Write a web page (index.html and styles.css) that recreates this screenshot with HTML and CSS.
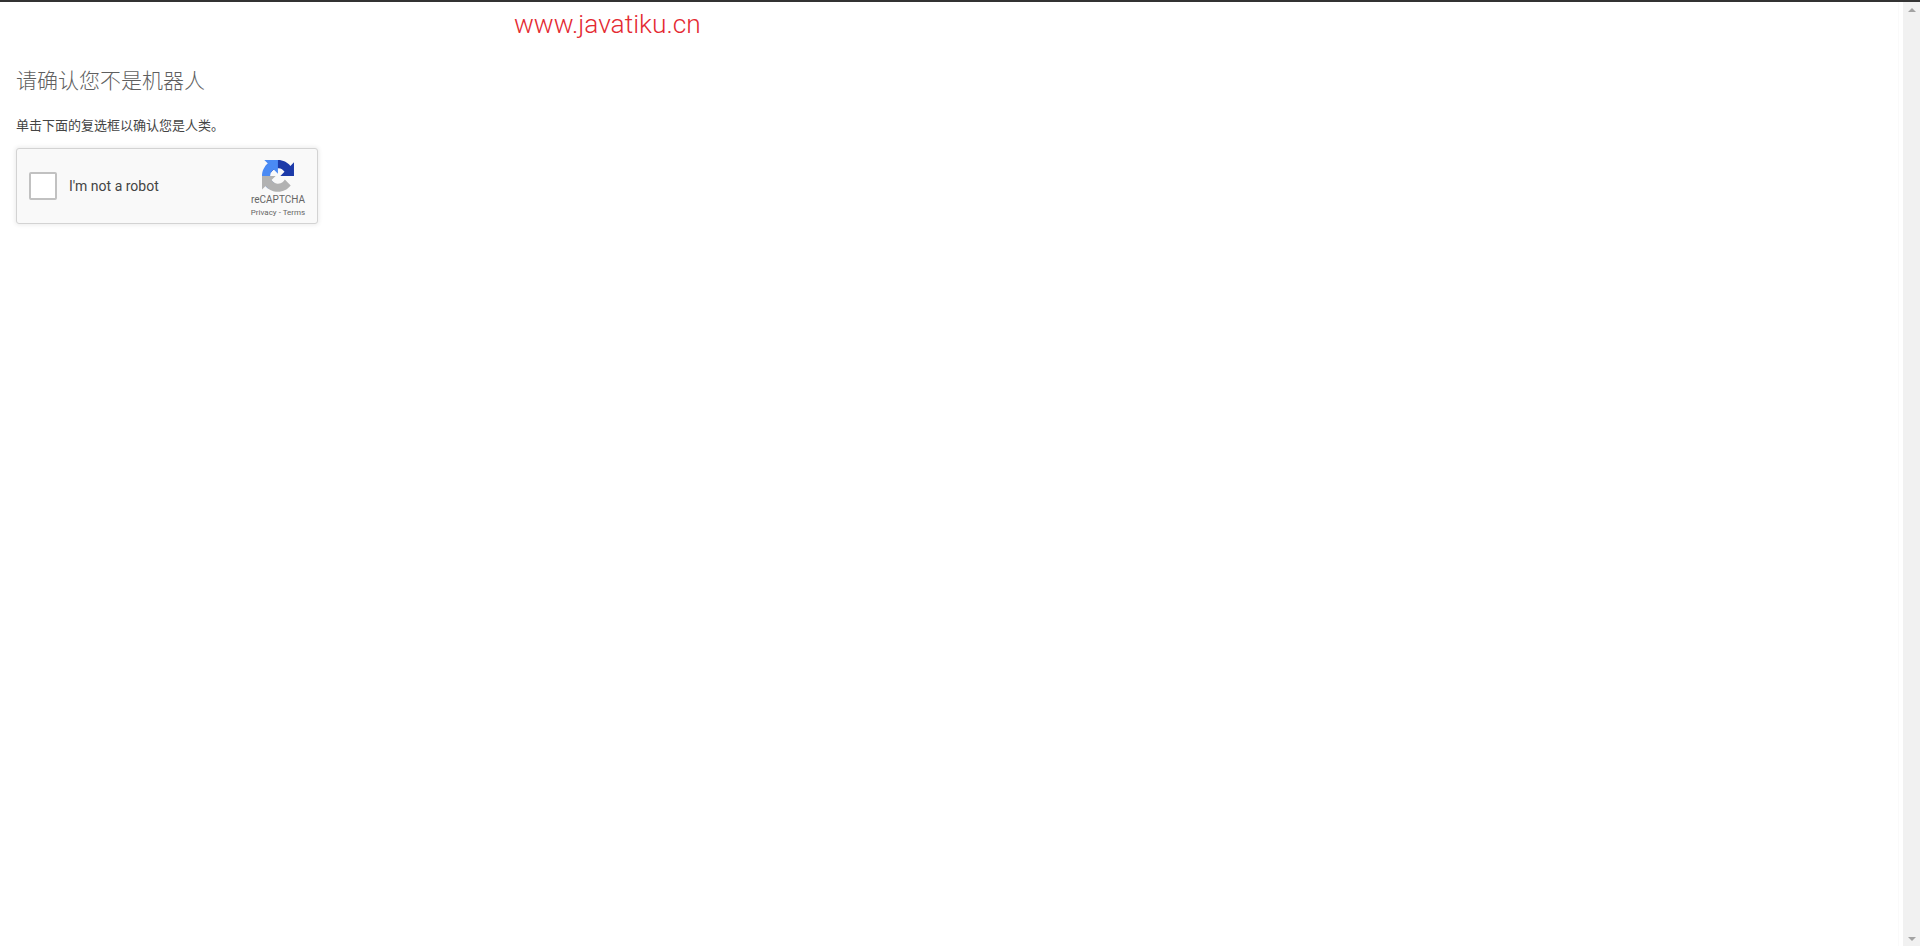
FILE: index.html
```html
<!DOCTYPE html>
<html lang="zh-CN">
<head>
    <meta charset="UTF-8">
    <meta name="viewport" content="width=device-width, initial-scale=1.0">
    <title>请确认您不是机器人</title>
    <link rel="stylesheet" href="styles.css">
</head>
<body>
    <div class="page">
        <div class="watermark">www.javatiku.cn</div>

        <div class="content">
            <h1>请确认您不是机器人</h1>
            <p>单击下面的复选框以确认您是人类。</p>

            <div class="recaptcha">
                <div class="checkbox"></div>
                <span class="robot-label">I'm not a robot</span>
                <div class="recaptcha-brand">
                    <svg class="recaptcha-logo" viewBox="0 0 64 64">
                        <path fill="#1c3aa9" d="M64 31.955l-.033-1.37V4.687l-7.16 7.16C50.948 4.674 42.033.093 32.05.093c-10.4 0-19.622 4.96-25.458 12.64l11.736 11.86a15.55 15.55 0 0 1 4.754-5.334c2.05-1.6 4.952-2.906 8.968-2.906.485 0 .86.057 1.135.163 4.976.393 9.288 3.14 11.828 7.124l-8.307 8.307L63.997 32"/>
                        <path fill="#4a8af4" d="M31.862 0l-1.37.033H4.594l7.16 7.16C4.58 13.052 0 21.967 0 31.95c0 10.4 4.96 19.622 12.64 25.458l11.86-11.736a15.55 15.55 0 0 1-5.334-4.754c-1.6-2.05-2.906-4.952-2.906-8.968 0-.485.057-.86.163-1.135.393-4.976 3.14-9.288 7.124-11.828l8.307 8.307L31.904.003"/>
                        <path fill="#b2b2b2" d="M.002 31.853l.033 1.37v25.898l7.16-7.16c5.86 7.173 14.775 11.754 24.76 11.754 10.4 0 19.622-4.96 25.458-12.64l-11.736-11.86a15.55 15.55 0 0 1-4.754 5.334c-2.05 1.6-4.952 2.906-8.968 2.906-.485 0-.86-.057-1.135-.163-4.976-.393-9.288-3.14-11.828-7.124l8.307-8.307L.005 31.81"/>
                    </svg>
                    <div class="brand-name">reCAPTCHA</div>
                    <div class="brand-links">Privacy - Terms</div>
                </div>
            </div>
        </div>
    </div>

    <div class="scrollbar">
        <div class="arrow-up"></div>
        <div class="arrow-down"></div>
    </div>
</body>
</html>
```

FILE: styles.css
```css
html, body {
    height: 100%;
}

body {
    margin: 0;
    box-sizing: border-box;
    border-top: 2px solid #333;
    background-color: #fff;
    display: flex;
    overflow: hidden;
    font-family: Roboto, "Noto Sans CJK SC", sans-serif;
}

.page {
    flex: 1;
    margin-right: 4px;
    border-right: 1px solid #fafafa;
}

.watermark {
    padding: 7px 0 0 514px;
    height: 37px;
    box-sizing: border-box;
    font-family: Roboto, sans-serif;
    font-size: 26.3px;
    font-weight: 300;
    line-height: 30px;
    color: #e42a32;
}

.content {
    padding: 0 16px;
}

h1 {
    margin: 30px 0 0;
    font-size: 21px;
    line-height: 24px;
    font-weight: 300;
    color: #5f5f5f;
}

p {
    margin: 24px 0 0;
    font-size: 13px;
    line-height: 18px;
    color: #444;
}

.recaptcha {
    margin-top: 13px;
    width: 302px;
    height: 76px;
    box-sizing: border-box;
    background-color: #f9f9f9;
    border: 1px solid #d3d3d3;
    border-radius: 3px;
    box-shadow: 0 0 4px 1px rgba(0, 0, 0, 0.08);
    display: flex;
    align-items: center;
    padding-left: 12px;
}

.checkbox {
    width: 28px;
    height: 28px;
    box-sizing: border-box;
    background-color: #fff;
    border: 2px solid #c1c1c1;
    border-radius: 2px;
}

.robot-label {
    margin-left: 12px;
    font-size: 14px;
    color: #444;
}

.recaptcha-brand {
    margin-left: auto;
    width: 70px;
    margin-top: 6px;
    margin-right: 4px;
    display: flex;
    flex-direction: column;
    align-items: center;
    color: #666;
}

.recaptcha-logo {
    width: 32px;
    height: 32px;
}

.brand-name {
    font-size: 10px;
    line-height: 15px;
}

.brand-links {
    font-size: 8px;
    line-height: 11px;
}

.scrollbar {
    width: 17px;
    background-color: #f1f1f1;
    display: flex;
    flex-direction: column;
    justify-content: space-between;
    align-items: center;
    padding: 6px 0 5px;
    box-sizing: border-box;
}

.arrow-up,
.arrow-down {
    width: 0;
    height: 0;
    border-left: 4px solid transparent;
    border-right: 4px solid transparent;
}

.arrow-up {
    border-bottom: 4px solid #a3a3a3;
}

.arrow-down {
    border-top: 4px solid #a3a3a3;
}
```
